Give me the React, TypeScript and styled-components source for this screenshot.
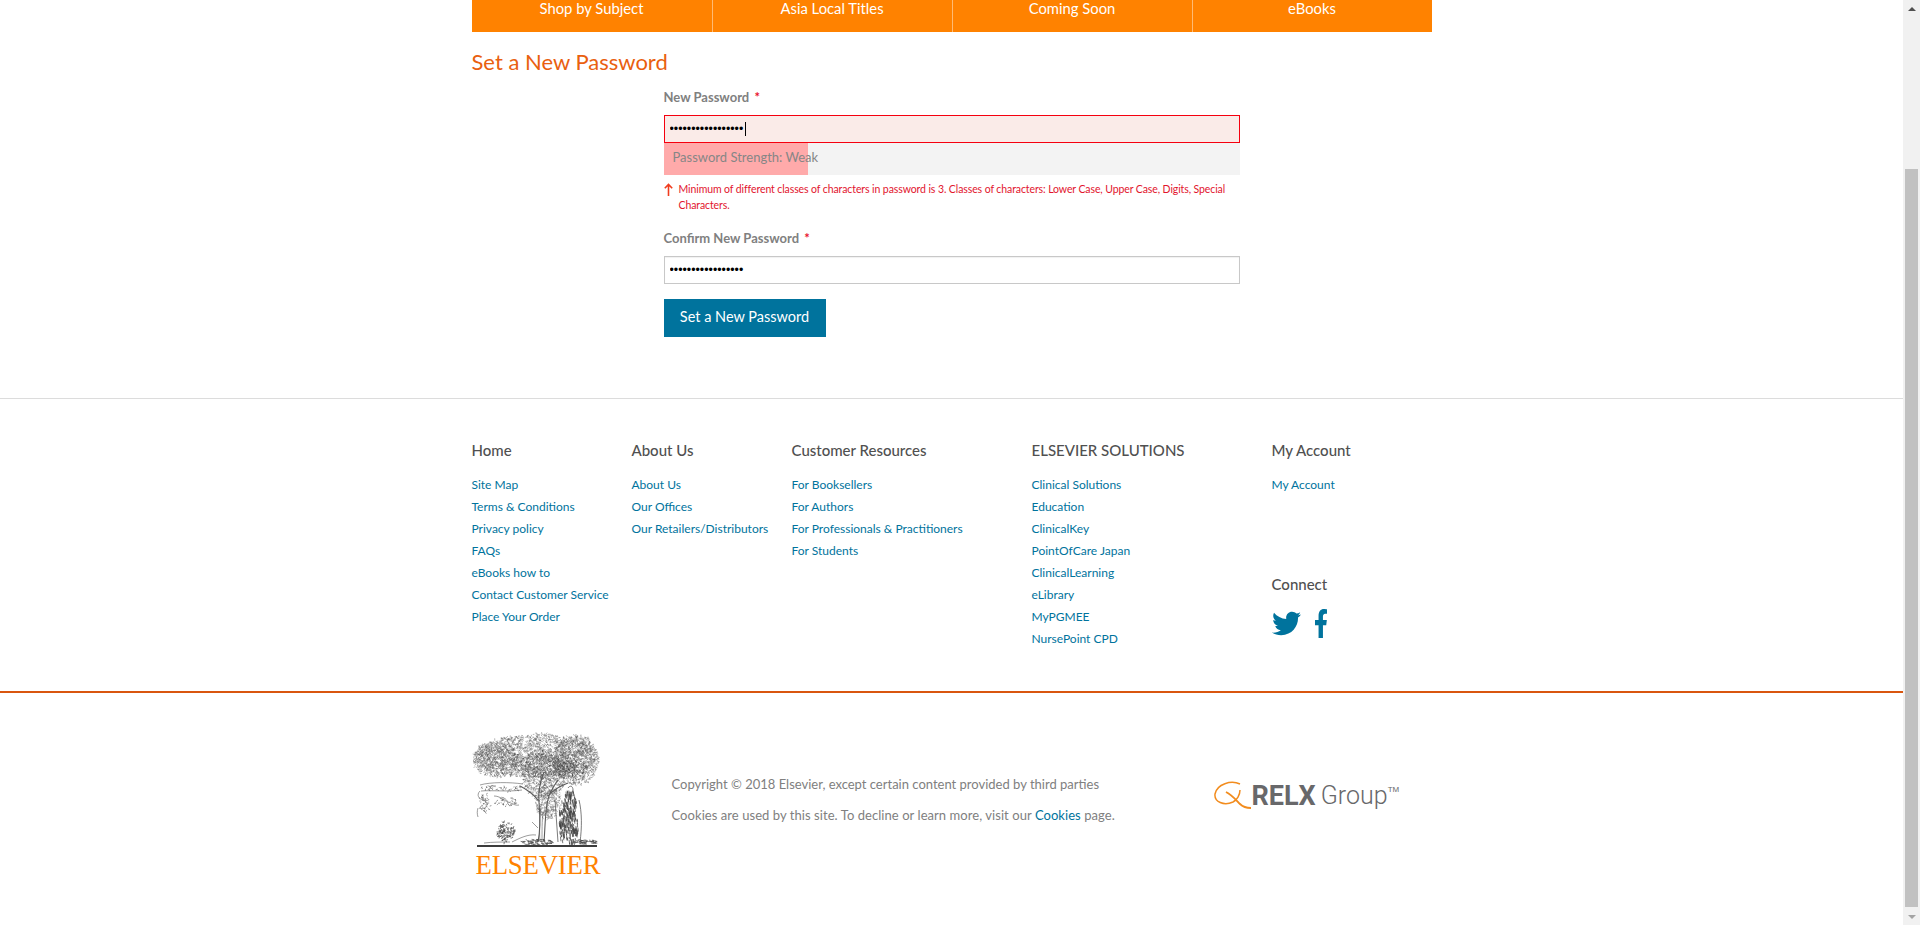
import { useMemo } from "react";
import styled, { createGlobalStyle } from "styled-components";
import { FaTwitter, FaFacebookF } from "react-icons/fa";

const GlobalStyle = createGlobalStyle`
  html, body {
    margin: 0;
    padding: 0;
    background: #fff;
    overflow: hidden;
  }
  * {
    box-sizing: border-box;
  }
  body {
    font-family: Lato, "Open Sans", sans-serif;
  }
`;

const navItems = ["Shop by Subject", "Asia Local Titles", "Coming Soon", "eBooks"];

const footerColumns = [
  {
    title: "Home",
    wide: false,
    links: ["Site Map", "Terms & Conditions", "Privacy policy", "FAQs", "eBooks how to", "Contact Customer Service", "Place Your Order"],
  },
  {
    title: "About Us",
    wide: false,
    links: ["About Us", "Our Offices", "Our Retailers/Distributors"],
  },
  {
    title: "Customer Resources",
    wide: true,
    links: ["For Booksellers", "For Authors", "For Professionals & Practitioners", "For Students"],
  },
  {
    title: "ELSEVIER SOLUTIONS",
    wide: true,
    links: ["Clinical Solutions", "Education", "ClinicalKey", "PointOfCare Japan", "ClinicalLearning", "eLibrary", "MyPGMEE", "NursePoint CPD"],
  },
];

// small random strokes give the engraved look of the tree
const hatch = (blobs: number[][], density: number, minLen: number, maxLen: number, seedStart: number, angle?: number) => {
  let seed = seedStart;
  const rnd = () => {
    seed = (seed * 16807) % 2147483647;
    return seed / 2147483647;
  };
  let d = "";
  blobs.forEach(([cx, cy, rx, ry]) => {
    const count = Math.round(rx * ry * density);
    for (let i = 0; i < count; i++) {
      const a = rnd() * Math.PI * 2;
      const r = Math.sqrt(rnd());
      const x = cx + Math.cos(a) * r * rx;
      const y = cy + Math.sin(a) * r * ry;
      const b = angle ?? rnd() * Math.PI * 2;
      const l = minLen + rnd() * (maxLen - minLen);
      d += `M${x.toFixed(1)} ${y.toFixed(1)}l${(Math.cos(b) * l).toFixed(1)} ${(Math.sin(b) * l).toFixed(1)}`;
    }
  });
  return d;
};

const canopy = [
  [64, 26, 62, 22],
  [24, 30, 23, 18],
  [104, 30, 23, 25],
  [72, 46, 22, 22],
  [76, 72, 13, 17],
];
const bush = [[34, 102, 9, 10]];
const figure = [
  [98, 72, 6, 14],
  [99, 96, 7, 17],
  [90, 90, 3, 20],
];
const hill = [
  [64, 112, 16, 3],
  [112, 112, 12, 3],
];
const banner = [
  [29, 58, 21, 3],
  [13, 72, 6, 10],
  [34, 72, 12, 5],
];

const TreeEngraving = () => {
  const { leaves, shade, body, brush, ground, scroll } = useMemo(
    () => ({
      leaves: hatch(canopy, 1.5, 1, 2.6, 42),
      shade: hatch([[70, 34, 30, 14], [100, 40, 16, 10]], 0.7, 1, 2.2, 77),
      body: hatch(figure, 1.1, 2, 5, 13, 1.45),
      brush: hatch(bush, 1.4, 1, 3, 91),
      ground: hatch(hill, 1.5, 1, 3, 55, 0.15),
      scroll: hatch(banner, 0.7, 1, 2.4, 29),
    }),
    [],
  );
  return (
    <svg width="135" height="122" viewBox="0 0 135 122" fill="none" stroke="#5a5a5a">
      <path d={leaves} strokeWidth="0.55" opacity="0.8" />
      <path d={shade} strokeWidth="0.6" stroke="#333" opacity="0.7" />
      <path d="M66 112c3-14 2-28 1-40-1-10 1-20 5-30M72 112c1-12 1-26 3-38 1-8 5-16 11-24M66 70c-5-6-10-10-18-14M76 66c5-6 12-10 20-13" strokeWidth="1.1" />
      <path d="M68 112c-1-12 0-26 1-36M70 112c0-10 0-22 1-30" strokeWidth="0.6" />
      {/* banner */}
      <path d={scroll} strokeWidth="0.55" stroke="#444" />
      <path d="M8 55c10-3 30-3 43-1M9 61c10-1 28 1 41-1M8 61c-4 4-1 8 3 9 4 1 5 4 3 7-2 2-5 2-7 1M6 78c-1 3-1 6 0 9M22 66c6 0 9 4 14 6 4 1 7 4 11 3" strokeWidth="0.6" />
      {/* figure */}
      <path d={body} strokeWidth="0.7" stroke="#404040" />
      <path d="M96 58c2-3 5-2 5 2 0 2-1 3-3 3M83 70l3 42M107 70c3 12 3 28 1 42" strokeWidth="0.8" />
      {/* bush and ground */}
      <path d={brush} strokeWidth="0.7" stroke="#444" />
      <path d={ground} strokeWidth="0.7" stroke="#444" />
      <path d="M40 112c8-4 16-8 24-7M60 92l6 6M12 113c8-1 18-1 26-1" strokeWidth="0.6" />
      <path d="M5 116h120" stroke="#3c3c3c" strokeWidth="2" />
    </svg>
  );
};

const App = () => (
  <Shell>
    <GlobalStyle />
    <Page>
      <Container>
        <MainNav>
          {navItems.map((item) => (
            <NavItem key={item}>{item}</NavItem>
          ))}
        </MainNav>
        <PageTitle>Set a New Password</PageTitle>
        <PasswordForm>
          <FieldLabel>
            New Password <Required>*</Required>
          </FieldLabel>
          <InputWrap>
            <PasswordInput type="password" defaultValue="aaaaaaaaaaaaaaaaa" readOnly $invalid />
            <Caret />
          </InputWrap>
          <StrengthBar>
            <StrengthFill style={{ width: "25%" }} />
            <StrengthText>Password Strength: Weak</StrengthText>
          </StrengthBar>
          <ErrorMessage>
            <svg width="9" height="13" viewBox="0 0 9 13" fill="none" stroke="#f03c1e" strokeWidth="1.6">
              <path d="M4.5 13V1.5M.8 5.2l3.7-3.8 3.7 3.8" />
            </svg>
            <span>
              Minimum of different classes of characters in password is 3. Classes of characters: Lower Case, Upper Case, Digits, Special Characters.
            </span>
          </ErrorMessage>
          <FieldLabel $second>
            Confirm New Password <Required>*</Required>
          </FieldLabel>
          <PasswordInput type="password" defaultValue="aaaaaaaaaaaaaaaaa" readOnly />
          <SubmitButton type="button">Set a New Password</SubmitButton>
        </PasswordForm>
      </Container>

      <LinksSection>
        <LinksGrid>
          {footerColumns.map((col) => (
            <LinkColumn key={col.title} $wide={col.wide}>
              <ColumnTitle>{col.title}</ColumnTitle>
              {col.links.map((link) => (
                <FooterLink key={link}>{link}</FooterLink>
              ))}
            </LinkColumn>
          ))}
          <LinkColumn>
            <ColumnTitle>My Account</ColumnTitle>
            <FooterLink>My Account</FooterLink>
            <ConnectTitle>Connect</ConnectTitle>
            <SocialRow>
              <FaTwitter size={29} />
              <FacebookIcon preserveAspectRatio="none" />
            </SocialRow>
          </LinkColumn>
        </LinksGrid>
      </LinksSection>

      <BottomSection>
        <BottomRow>
          <ElsevierBrand>
            <TreeEngraving />
            <ElsevierName>ELSEVIER</ElsevierName>
          </ElsevierBrand>
          <LegalText>
            <LegalLine>Copyright © 2018 Elsevier, except certain content provided by third parties</LegalLine>
            <LegalLine $loose>
              Cookies are used by this site. To decline or learn more, visit our <CookieLink>Cookies</CookieLink> page.
            </LegalLine>
          </LegalText>
          <RelxLogo>
            <svg width="38" height="30" viewBox="0 0 38 30" fill="none" stroke="#f28c1e">
              <path d="M26 3C17-1 3 3 1 13c-1 8 9 12 18 8 4-2 7-7 7-12" strokeWidth="1.5" />
              <path d="M12 11c6 3 10 8 14 12 3 3 7 4 11 4" strokeWidth="1.9" />
            </svg>
            <RelxName>RELX</RelxName>
            <RelxGroup>Group</RelxGroup>
            <RelxMark>TM</RelxMark>
          </RelxLogo>
        </BottomRow>
      </BottomSection>
    </Page>

    <Scrollbar>
      <ScrollArrow $up />
      <ScrollTrack>
        <ScrollThumb />
      </ScrollTrack>
      <ScrollArrow />
    </Scrollbar>
  </Shell>
);

const Shell = styled.div`
  display: flex;
  width: 1920px;
  height: 925px;
  overflow: hidden;
`;

const Page = styled.div`
  flex: 1;
  min-width: 0;
  height: 925px;
  overflow: hidden;
`;

const Container = styled.div`
  width: 960px;
  margin: 0 auto;
  height: 398px;
`;

const MainNav = styled.nav`
  display: grid;
  grid-template-columns: repeat(4, 240px);
  height: 32px;
  background: #ff8200;
`;

const NavItem = styled.div`
  color: #fff;
  font-size: 14.8px;
  line-height: 16px;
  text-align: center;
  & + & {
    border-left: 1px solid rgba(255, 255, 255, 0.45);
  }
`;

const PageTitle = styled.h1`
  margin: 17px 0 0;
  font-size: 22px;
  line-height: 26px;
  font-weight: 400;
  color: #e9600f;
`;

const PasswordForm = styled.form`
  width: 576px;
  margin: 0 0 0 192px;
`;

const FieldLabel = styled.label<{ $second?: boolean }>`
  display: block;
  margin-top: ${(p) => (p.$second ? "16px" : "13px")};
  margin-bottom: 9px;
  font-size: 13px;
  line-height: 18px;
  font-weight: 700;
  color: #808080;
`;

const Required = styled.span`
  color: #e8112d;
  margin-left: 2px;
`;

const InputWrap = styled.div`
  position: relative;
`;

const PasswordInput = styled.input<{ $invalid?: boolean }>`
  display: block;
  width: 100%;
  height: 28px;
  padding: 0 5px;
  border: 1px solid ${(p) => (p.$invalid ? "#f5000f" : "#c8c8c8")};
  background: ${(p) => (p.$invalid ? "#faebe8" : "#fff")};
  box-shadow: ${(p) => (p.$invalid ? "none" : "inset 0 1px 1px rgba(0, 0, 0, 0.06)")};
  border-radius: 0;
  outline: none;
  font-family: "Liberation Sans", sans-serif;
  font-size: 12.4px;
  color: #000;
`;

const Caret = styled.span`
  position: absolute;
  left: 81px;
  top: 7px;
  width: 1px;
  height: 14px;
  background: #000;
`;

const StrengthBar = styled.div`
  position: relative;
  height: 32px;
  background: #f3f3f3;
`;

const StrengthFill = styled.div`
  height: 100%;
  background: #ffaaaa;
`;

const StrengthText = styled.span`
  position: absolute;
  left: 9px;
  top: 0;
  font-size: 13px;
  line-height: 28px;
  color: #868686;
`;

const ErrorMessage = styled.div`
  display: flex;
  gap: 6px;
  align-items: flex-start;
  margin-top: 6px;
  font-size: 10.5px;
  line-height: 16px;
  letter-spacing: -0.1px;
  color: #e2142d;
  svg {
    flex: none;
    margin-top: 2px;
  }
`;

const SubmitButton = styled.button`
  display: block;
  width: 162px;
  height: 38px;
  margin-top: 15px;
  padding: 0 0 3px;
  border: none;
  background: #00739d;
  color: #fff;
  font-family: Lato, sans-serif;
  font-size: 14.5px;
`;

const LinksSection = styled.section`
  height: 295px;
  border-top: 1px solid #dcdcdc;
  border-bottom: 2px solid #d9560f;
`;

const LinksGrid = styled.div`
  display: flex;
  width: 960px;
  margin: 0 auto;
  padding-top: 40px;
`;

const LinkColumn = styled.div<{ $wide?: boolean }>`
  width: ${(p) => (p.$wide ? "240px" : "160px")};
`;

const ColumnTitle = styled.h3`
  margin: 0 0 13px;
  font-size: 15px;
  line-height: 22px;
  font-weight: 500;
  color: #505050;
`;

const FooterLink = styled.a`
  display: block;
  font-size: 12px;
  line-height: 22px;
  color: #00739d;
  white-space: nowrap;
`;

const ConnectTitle = styled(ColumnTitle)`
  margin: 77px 0 0;
`;

const SocialRow = styled.div`
  display: flex;
  align-items: center;
  gap: 13px;
  margin-top: 14px;
  color: #00739d;
`;

const FacebookIcon = styled(FaFacebookF)`
  width: 14px;
  height: 29px;
`;

const BottomSection = styled.section`
  height: 230px;
`;

const BottomRow = styled.div`
  display: flex;
  width: 960px;
  margin: 0 auto;
  padding-top: 37px;
`;

const ElsevierBrand = styled.div`
  width: 200px;
  flex: none;
`;

const ElsevierName = styled.div`
  margin: -2px 0 0 4px;
  font-family: "Liberation Serif", serif;
  font-size: 26.8px;
  line-height: 24px;
  letter-spacing: -0.2px;
  color: #ff8200;
`;

const LegalText = styled.div`
  width: 542px;
  flex: none;
  padding-top: 45px;
`;

const LegalLine = styled.p<{ $loose?: boolean }>`
  margin: 0 0 13px;
  font-size: 13px;
  line-height: 18px;
  letter-spacing: ${(p) => (p.$loose ? "0.06px" : "0")};
  color: #808080;
`;

const CookieLink = styled.a`
  color: #00739d;
`;

const RelxLogo = styled.div`
  display: flex;
  align-items: flex-start;
  flex: none;
  margin-top: 51px;
  svg {
    flex: none;
  }
`;

const RelxName = styled.span`
  font-family: Roboto, sans-serif;
  font-weight: 700;
  font-size: 27px;
  line-height: 30px;
  color: #68686a;
`;

const RelxGroup = styled.span`
  margin-left: 5px;
  font-family: Roboto, sans-serif;
  font-weight: 300;
  font-size: 25px;
  line-height: 30px;
  color: #68686a;
`;

const RelxMark = styled.span`
  margin-top: 4px;
  font-family: "Liberation Sans", sans-serif;
  font-size: 8px;
  line-height: 10px;
  color: #68686a;
`;

const Scrollbar = styled.aside`
  display: flex;
  flex-direction: column;
  width: 17px;
  height: 925px;
  flex: none;
  background: #f1f1f1;
`;

const ScrollArrow = styled.div<{ $up?: boolean }>`
  flex: none;
  height: 17px;
  display: flex;
  align-items: center;
  justify-content: center;
  &::before {
    content: "";
    border-left: 4px solid transparent;
    border-right: 4px solid transparent;
    ${(p) => (p.$up ? "border-bottom: 4px solid #505050;" : "border-top: 4px solid #a3a3a3;")}
  }
`;

const ScrollTrack = styled.div`
  flex: 1;
  padding: 152px 2px 1px;
`;

const ScrollThumb = styled.div`
  height: 100%;
  background: #c1c1c1;
`;

export default App;
